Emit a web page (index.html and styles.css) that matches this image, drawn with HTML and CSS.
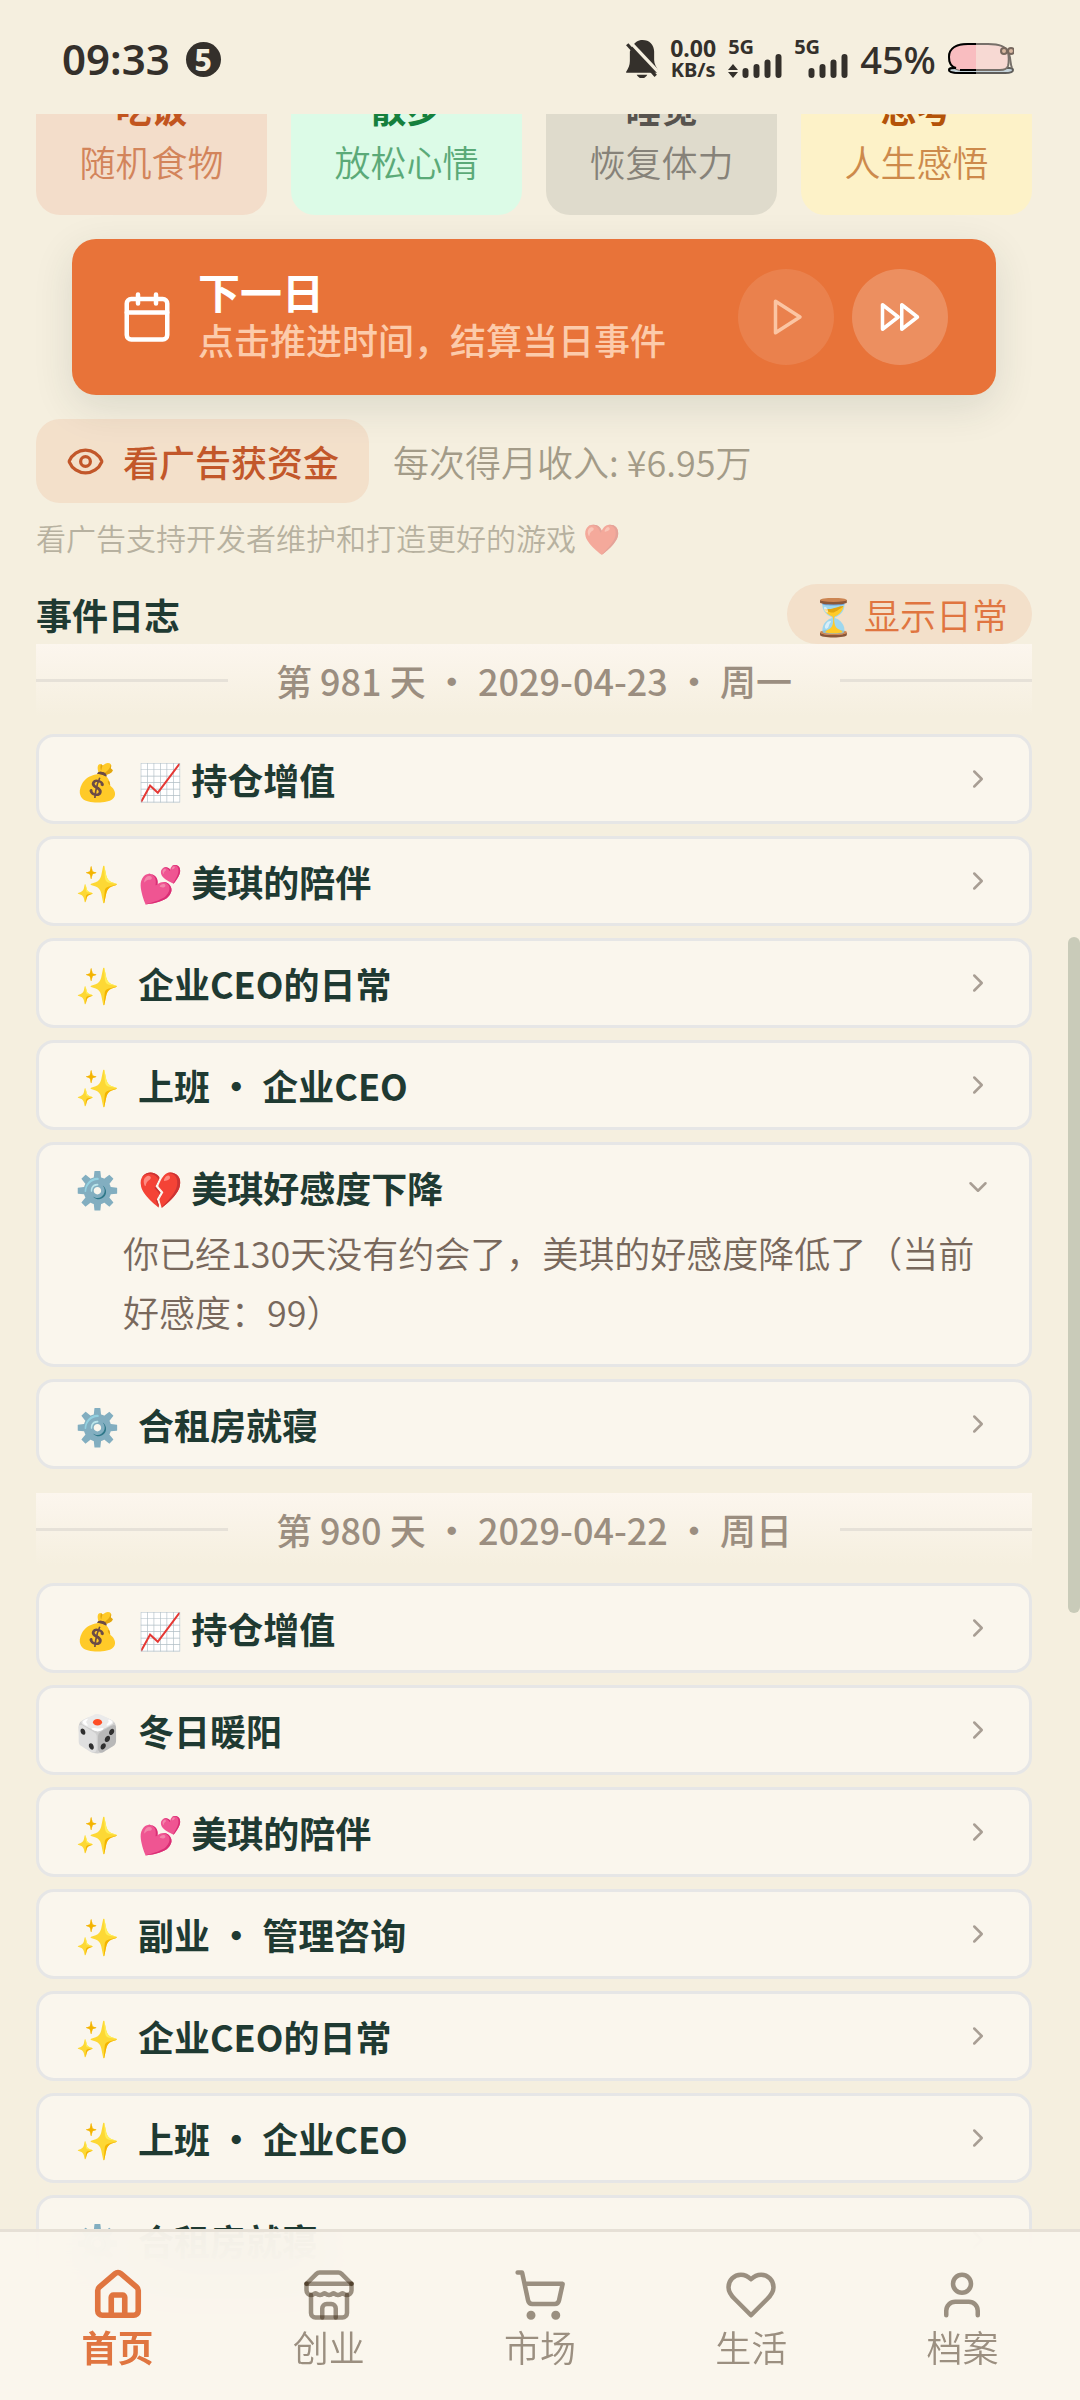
FILE: index.html
```html
<!DOCTYPE html>
<html lang="zh-CN">
<head>
    <meta charset="UTF-8">
    <meta name="viewport" content="width=device-width, initial-scale=1.0">
    <title>首页</title>
    <link rel="stylesheet" href="styles.css">
</head>
<body>
    <!-- Shared icons -->
    <svg class="sprite" aria-hidden="true">
        <symbol id="chevron" viewBox="0 0 24 24"><path d="m9 18 6-6-6-6"/></symbol>
        <symbol id="signal" viewBox="0 0 40 24"><path d="M3.500 17v4M14.500 13v8M25.500 8.500v12.500M36.500 3v18"/></symbol>
    </svg>

    <header class="status-bar">
        <div class="status-left">
            <span class="clock">09:33</span>
            <span class="count">5</span>
        </div>
        <div class="status-right">
            <svg class="bell" viewBox="0 0 30 36" aria-hidden="true">
                <path class="solid" d="M6 6C8 2.500 11 0 15.500 0 22 0 26.500 4.500 26.500 11v8c0 4 2 6 3.500 9.500V31H0v-1c2-3 3.500-6 3.500-10v-9z"/>
                <path class="solid" d="M10 33h10c-1 2-3 3.500-5 3.500S11 35 10 33z"/>
                <path class="gap" d="M3 1 33 33"/>
                <path class="slash" d="m1 4 27 30"/>
            </svg>
            <div class="speed"><span>0.00</span><small>KB/s</small></div>
            <div class="network">
                <span>5G</span>
                <div class="network-bars">
                    <svg class="arrows" viewBox="0 0 10 14" aria-hidden="true"><path d="m5 0 5 6H0zM5 14 0 8h10z"/></svg>
                    <svg class="signal" aria-hidden="true"><use href="#signal"/></svg>
                </div>
            </div>
            <div class="network">
                <span>5G</span>
                <div class="network-bars">
                    <svg class="signal" aria-hidden="true"><use href="#signal"/></svg>
                </div>
            </div>
            <span class="percent">45%</span>
            <svg class="battery" viewBox="0 0 66 32" aria-hidden="true">
                <path d="M1 27c0-2 2-2 3-2h57c2 0 4 0 4 2s-3 3-8 3H12c-6 0-11-1-11-3z" fill="#c5d3da" stroke="#5f5d5a"/>
                <path d="M28 1h12c10 0 18 2 20 8 1 5 1 10 0 14-1 3-4 4-8 4H14C6 27 1 21 1 14 1 5 9 1 20 1z" fill="#f7d9d3" stroke="#77706a"/>
                <path d="M28 1h-8C9 1 1 5 1 14c0 7 5 13 13 13h14z" fill="#f9bdc0"/>
                <path d="M28 1h-8C9 1 1 5 1 14c0 6 3 10 7 11-5 0-7 0-7 2s5 3 11 3h16M12 27h16" fill="none" stroke="#000"/>
                <path d="M61 11c2 5 1 10 3 14" fill="none" stroke="#77706a"/>
                <circle cx="56" cy="8" r="3" fill="#d8b7a0" stroke="#77685e"/>
                <circle cx="63" cy="8" r="3" fill="#d8b7a0" stroke="#77685e"/>
            </svg>
        </div>
    </header>

    <main class="page">
        <section class="quick-actions">
            <button class="action eat"><b>吃饭</b><span>随机食物</span></button>
            <button class="action walk"><b>散步</b><span>放松心情</span></button>
            <button class="action sleep"><b>睡觉</b><span>恢复体力</span></button>
            <button class="action think"><b>思考</b><span>人生感悟</span></button>
        </section>

        <section class="next-day">
            <svg class="icon icon-lg" viewBox="0 0 24 24" aria-hidden="true"><path d="M8 2v4M16 2v4M3 10h18"/><rect width="18" height="18" x="3" y="4" rx="2"/></svg>
            <div class="next-day-text">
                <h2>下一日</h2>
                <p>点击推进时间，结算当日事件</p>
            </div>
            <button class="round dim" aria-label="播放"><svg class="icon icon-md" viewBox="0 0 24 24" aria-hidden="true"><path d="m6 3 14 9-14 9z"/></svg></button>
            <button class="round" aria-label="快进"><svg class="icon icon-md" viewBox="0 0 24 24" aria-hidden="true"><path d="m13 19 9-7-9-7zM2 19l9-7-9-7z"/></svg></button>
        </section>

        <section class="ad">
            <button class="ad-button">
                <svg class="icon icon-eye" viewBox="0 0 24 24" aria-hidden="true"><path d="M2.062 12.348a1 1 0 0 1 0-.696 10.750 10.750 0 0 1 19.876 0 1 1 0 0 1 0 .696 10.750 10.750 0 0 1-19.876 0"/><circle cx="12" cy="12" r="3"/></svg>
                看广告获资金
            </button>
            <span>每次得月收入: ¥6.95万</span>
        </section>
        <p class="ad-note">看广告支持开发者维护和打造更好的游戏 ❤️</p>

        <section class="log-head">
            <h2>事件日志</h2>
            <button class="toggle">⏳ 显示日常</button>
        </section>

        <section class="day">
            <h3 class="date">第 981 天 • 2029-04-23 • 周一</h3>
            <details class="event"><summary><span>💰</span><b>📈 持仓增值</b><svg class="chevron"><use href="#chevron"/></svg></summary></details>
            <details class="event"><summary><span>✨</span><b>💕 美琪的陪伴</b><svg class="chevron"><use href="#chevron"/></svg></summary></details>
            <details class="event"><summary><span>✨</span><b>企业CEO的日常</b><svg class="chevron"><use href="#chevron"/></svg></summary></details>
            <details class="event"><summary><span>✨</span><b>上班 • 企业CEO</b><svg class="chevron"><use href="#chevron"/></svg></summary></details>
            <details class="event" open>
                <summary><span>⚙️</span><b>💔 美琪好感度下降</b><svg class="chevron"><use href="#chevron"/></svg></summary>
                <p>你已经130天没有约会了，美琪的好感度降低了（当前好感度：99）</p>
            </details>
            <details class="event"><summary><span>⚙️</span><b>合租房就寝</b><svg class="chevron"><use href="#chevron"/></svg></summary></details>
        </section>

        <section class="day">
            <h3 class="date">第 980 天 • 2029-04-22 • 周日</h3>
            <details class="event"><summary><span>💰</span><b>📈 持仓增值</b><svg class="chevron"><use href="#chevron"/></svg></summary></details>
            <details class="event"><summary><span>🎲</span><b>冬日暖阳</b><svg class="chevron"><use href="#chevron"/></svg></summary></details>
            <details class="event"><summary><span>✨</span><b>💕 美琪的陪伴</b><svg class="chevron"><use href="#chevron"/></svg></summary></details>
            <details class="event"><summary><span>✨</span><b>副业 • 管理咨询</b><svg class="chevron"><use href="#chevron"/></svg></summary></details>
            <details class="event"><summary><span>✨</span><b>企业CEO的日常</b><svg class="chevron"><use href="#chevron"/></svg></summary></details>
            <details class="event"><summary><span>✨</span><b>上班 • 企业CEO</b><svg class="chevron"><use href="#chevron"/></svg></summary></details>
            <details class="event"><summary><span>⚙️</span><b>合租房就寝</b><svg class="chevron"><use href="#chevron"/></svg></summary></details>
        </section>

        <div class="scroll-thumb"></div>
    </main>

    <nav class="tabs">
        <a href="#home" class="active">
            <svg class="icon icon-lg" viewBox="0 0 24 24" aria-hidden="true"><path d="M15 21v-8a1 1 0 0 0-1-1h-4a1 1 0 0 0-1 1v8"/><path d="M3 10a2 2 0 0 1 .709-1.528l7-5.999a2 2 0 0 1 2.582 0l7 5.999A2 2 0 0 1 21 10v9a2 2 0 0 1-2 2H5a2 2 0 0 1-2-2z"/></svg>
            首页
        </a>
        <a href="#business">
            <svg class="icon icon-lg" viewBox="0 0 24 24" aria-hidden="true"><path d="m2 7 4.410-4.410A2 2 0 0 1 7.830 2h8.340a2 2 0 0 1 1.420.590L22 7"/><path d="M4 12v8a2 2 0 0 0 2 2h12a2 2 0 0 0 2-2v-8"/><path d="M15 22v-4a2 2 0 0 0-2-2h-2a2 2 0 0 0-2 2v4"/><path d="M2 7h20"/><path d="M22 7v3a2 2 0 0 1-2 2a2.700 2.700 0 0 1-1.590-.630.700.700 0 0 0-.820 0A2.700 2.700 0 0 1 16 12a2.700 2.700 0 0 1-1.590-.630.700.700 0 0 0-.820 0A2.700 2.700 0 0 1 12 12a2.700 2.700 0 0 1-1.590-.630.700.700 0 0 0-.820 0A2.700 2.700 0 0 1 8 12a2.700 2.700 0 0 1-1.590-.630.700.700 0 0 0-.820 0A2.700 2.700 0 0 1 4 12a2 2 0 0 1-2-2V7"/></svg>
            创业
        </a>
        <a href="#market">
            <svg class="icon icon-lg" viewBox="0 0 24 24" aria-hidden="true"><circle cx="8" cy="21" r="1"/><circle cx="19" cy="21" r="1"/><path d="M2.050 2.050h2l2.660 12.420a2 2 0 0 0 2 1.580h9.780a2 2 0 0 0 1.950-1.570l1.650-7.430H5.120"/></svg>
            市场
        </a>
        <a href="#life">
            <svg class="icon icon-lg" viewBox="0 0 24 24" aria-hidden="true"><path d="M19 14c1.490-1.460 3-3.210 3-5.500A5.500 5.500 0 0 0 16.500 3c-1.760 0-3 .5-4.500 2-1.500-1.500-2.740-2-4.500-2A5.500 5.500 0 0 0 2 8.500c0 2.300 1.500 4.050 3 5.500l7 7Z"/></svg>
            生活
        </a>
        <a href="#profile">
            <svg class="icon icon-lg" viewBox="0 0 24 24" aria-hidden="true"><path d="M19 21v-2a4 4 0 0 0-4-4H9a4 4 0 0 0-4 4v2"/><circle cx="12" cy="7" r="4"/></svg>
            档案
        </a>
    </nav>
</body>
</html>
```

FILE: styles.css
```css
/* General Styles */
* {
    box-sizing: border-box;
}

body {
    display: flex;
    flex-direction: column;
    height: 100vh;
    margin: 0;
    overflow: hidden;
    background: #f5efdf;
    color: #1f3a32;
    font-family: "Noto Sans CJK SC", sans-serif;
    font-size: 36px;
    font-weight: 350;
    line-height: 54px;
}

h2, h3, p {
    margin: 0;
    font-size: 36px;
}

button {
    border: none;
    font: inherit;
    cursor: pointer;
}

b {
    font-weight: 700;
}

.sprite {
    position: absolute;
    width: 0;
    height: 0;
}

.icon, .chevron {
    flex: none;
    fill: none;
    stroke: currentColor;
    stroke-width: 2;
    stroke-linecap: round;
    stroke-linejoin: round;
}

.icon-lg {
    width: 54px;
    height: 54px;
}

.icon-md {
    width: 42px;
    height: 42px;
}

.icon-eye {
    width: 39px;
    height: 39px;
}

/* Status Bar */
.status-bar {
    flex: none;
    display: flex;
    justify-content: space-between;
    align-items: center;
    height: 114px;
    padding: 4px 66px 0 62px;
    color: #34302b;
    font-family: "Noto Sans", sans-serif;
}

.status-left, .status-right {
    display: flex;
    align-items: center;
}

.status-left {
    gap: 16px;
}

.clock {
    font-size: 42px;
    font-weight: 600;
}

.count {
    width: 35px;
    height: 35px;
    border-radius: 50%;
    background: #34302b;
    color: #f5efdf;
    font-size: 30px;
    font-weight: 800;
    line-height: 35px;
    text-align: center;
}

.status-right {
    gap: 12px;
}

.bell {
    width: 32px;
    height: 38px;
}

.bell .gap, .bell .slash {
    stroke: #f5efdf;
    stroke-width: 3;
}

.bell .solid {
    fill: #34302b;
}

.bell .slash {
    stroke: #34302b;
}

.speed {
    display: flex;
    flex-direction: column;
    align-items: center;
    font-size: 23px;
    font-weight: 700;
    line-height: 21px;
}

.speed small {
    font-size: 20px;
}

.network {
    display: flex;
    flex-direction: column;
    width: 54px;
    font-size: 20px;
    font-weight: 700;
    line-height: 14px;
}

.network-bars {
    display: flex;
    justify-content: flex-end;
    align-items: flex-end;
    gap: 4px;
}

.arrows {
    width: 10px;
    height: 14px;
    fill: #34302b;
}

.signal {
    width: 40px;
    height: 24px;
    fill: none;
    stroke: #34302b;
    stroke-width: 6;
    stroke-linecap: round;
}

.percent {
    font-size: 38px;
    font-weight: 500;
}

.battery {
    width: 66px;
    height: 32px;
    stroke-width: 2;
}

/* Page */
.page {
    position: relative;
    flex: 1;
    min-height: 0;
    padding: 0 48px 0 36px;
    overflow: hidden;
}

.quick-actions {
    display: grid;
    grid-template-columns: repeat(4, 1fr);
    gap: 24px;
    margin-top: -58px;
}

.action {
    display: flex;
    flex-direction: column;
    align-items: center;
    padding: 24px 0 27px;
    border-radius: 24px;
}

.action span {
    opacity: 0.65;
}

.eat {
    background: #f3ddca;
    color: #c2551f;
}

.walk {
    background: #dcfbe7;
    color: #15803d;
}

.sleep {
    background: #dfdbcc;
    color: #57534e;
}

.think {
    background: #fdf2c8;
    color: #b45309;
}

/* Next Day */
.next-day {
    display: flex;
    align-items: center;
    gap: 18px;
    margin: 24px 36px;
    padding: 30px 48px;
    border-radius: 24px;
    background: #e87339;
    color: #fff;
    box-shadow: 0 12px 40px rgba(31, 58, 50, 0.12);
}

.next-day-text {
    flex: 1;
    padding-left: 6px;
}

.next-day-text h2 {
    font-size: 42px;
    line-height: 44px;
}

.next-day-text p {
    color: #fccbab;
    font-weight: 500;
    line-height: 52px;
}

.round {
    display: flex;
    justify-content: center;
    align-items: center;
    width: 96px;
    height: 96px;
    border-radius: 50%;
    background: rgba(255, 255, 255, 0.2);
    color: #fff;
}

.round.dim {
    background: rgba(255, 255, 255, 0.1);
    color: #fbc5a3;
}

/* Ad */
.ad {
    display: flex;
    align-items: center;
    gap: 24px;
    color: #a39b88;
}

.ad-button {
    display: flex;
    align-items: center;
    gap: 18px;
    padding: 15px 30px;
    border-radius: 24px;
    background: rgba(232, 115, 57, 0.12);
    color: #c2572a;
    font-weight: 500;
}

.ad-note {
    margin: 12px 0 24px;
    color: #5d5743;
    font-size: 30px;
    line-height: 45px;
    opacity: 0.4;
}

/* Event Log */
.log-head {
    display: flex;
    justify-content: space-between;
    align-items: center;
}

.toggle {
    padding: 3px 24px;
    border-radius: 30px;
    background: rgba(232, 115, 57, 0.12);
    color: #e07540;
}

.day {
    display: flex;
    flex-direction: column;
    gap: 12px;
    margin-bottom: 24px;
}

.date {
    display: flex;
    align-items: center;
    gap: 48px;
    margin-bottom: 6px;
    padding: 9px 0;
    background: linear-gradient(#fcf6ee, #f5efdf);
    color: #9b8e80;
    font-weight: 500;
}

.date::before, .date::after {
    content: "";
    flex: 1;
    height: 3px;
    background: #e6e1d8;
}

.event {
    border: 3px solid #e6e6e6;
    border-radius: 18px;
    background: #faf6ed;
}

.event summary {
    display: flex;
    align-items: center;
    gap: 18px;
    padding: 15px 36px;
    list-style: none;
    cursor: pointer;
}

.event b {
    flex: 1;
}

.event[open] summary {
    padding-bottom: 9px;
}

.event p {
    padding: 0 36px 23px 84px;
    color: #78685c;
    line-height: 59px;
}

.chevron {
    width: 30px;
    height: 30px;
    color: #a89e94;
}

.event[open] .chevron {
    transform: rotate(90deg);
}

.scroll-thumb {
    position: absolute;
    top: 36%;
    right: 0;
    width: 12px;
    height: 676px;
    border-radius: 6px;
    background: #c9cbb9;
}

/* Bottom Tabs */
.tabs {
    position: fixed;
    right: 0;
    bottom: 0;
    left: 0;
    display: flex;
    padding: 36px 12px 30px;
    border-top: 3px solid #e6e0d6;
    background: rgba(250, 245, 237, 0.95);
    backdrop-filter: blur(30px);
}

.tabs a {
    flex: 1;
    display: flex;
    flex-direction: column;
    align-items: center;
    color: #9b8f80;
    line-height: 48px;
    text-decoration: none;
}

.tabs .icon {
    color: rgba(60, 41, 19, 0.5);
}

.tabs .active {
    color: #e07540;
    font-weight: 700;
}

.tabs .active .icon {
    color: #e07540;
    stroke-width: 2.5;
}
```
